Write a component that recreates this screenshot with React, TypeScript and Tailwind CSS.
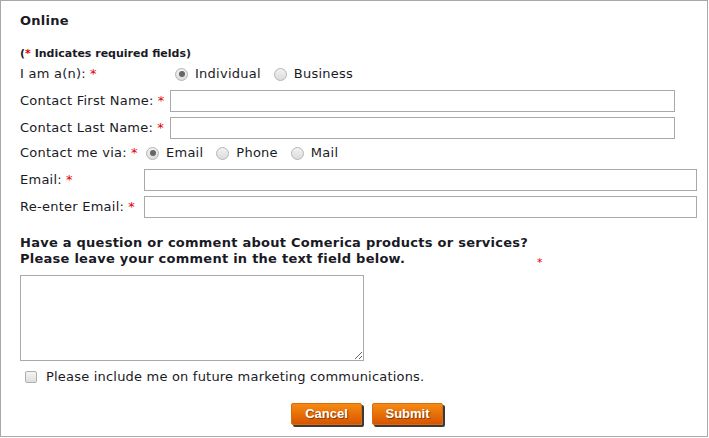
import React from 'react';

const Req: React.FC = () => <span className="text-[#e00000] ml-[4px]">*</span>;

const Radio: React.FC<{ checked?: boolean }> = ({ checked }) => (
  <span className="inline-flex items-center justify-center w-[13px] h-[13px] rounded-full border border-[#b4b4b4] bg-gradient-to-b from-[#f2f2f2] to-[#dcdcdc] shrink-0">
    {checked && <span className="w-[6px] h-[6px] rounded-full bg-[#666]" />}
  </span>
);

const TextBox: React.FC<{ w: string }> = ({ w }) => (
  <div className={`${w} h-[22px] border border-[#a9a9a9] bg-white shrink-0`} />
);

const OrangeButton: React.FC<{ label: string }> = ({ label }) => (
  <button className="w-[71px] h-[22px] rounded-[2px] border border-[#d86a10] bg-gradient-to-b from-[#f58a12] to-[#d85500] text-white font-bold text-[13px] tracking-normal shadow-[2px_2px_0_#3a3a3a] [text-shadow:1px_1px_1px_rgba(0,0,0,0.45)] font-['Liberation_Sans',Arial,sans-serif]">
    {label}
  </button>
);

const App: React.FC = () => {
  return (
    <div className="w-[708px] h-[437px] border border-[#a8a8a8] bg-white text-[#1a1a26] text-[13px] tracking-[0.25px] font-['DejaVu_Sans','Verdana',sans-serif] pl-[19px] pt-[12px]">
      <div className="h-[16px] leading-[16px] font-bold">Online</div>

      <div className="mt-[18px] h-[14px] leading-[14px] text-[11px] font-bold tracking-normal">
        (<span className="text-[#e00000]">*</span> Indicates required fields)
      </div>

      <div className="mt-[4px] h-[18px] flex items-center">
        <div className="w-[155px]">I am a(n):<Req /></div>
        <div className="flex items-center gap-[7px]">
          <Radio checked />
          <span className="mr-[6px]">Individual</span>
          <Radio />
          <span>Business</span>
        </div>
      </div>

      <div className="mt-[7px] flex items-center">
        <div className="w-[150px]">Contact First Name:<Req /></div>
        <TextBox w="w-[505px]" />
      </div>

      <div className="mt-[5px] flex items-center">
        <div className="w-[150px]">Contact Last Name:<Req /></div>
        <TextBox w="w-[505px]" />
      </div>

      <div className="mt-[5px] h-[18px] flex items-center">
        <div className="w-[126px]">Contact me via:<Req /></div>
        <div className="flex items-center gap-[7px]">
          <Radio checked />
          <span className="mr-[6px]">Email</span>
          <Radio />
          <span className="mr-[6px]">Phone</span>
          <Radio />
          <span>Mail</span>
        </div>
      </div>

      <div className="mt-[7px] flex items-center">
        <div className="w-[124px]">Email:<Req /></div>
        <TextBox w="w-[553px]" />
      </div>

      <div className="mt-[5px] flex items-center">
        <div className="w-[124px]">Re-enter Email:<Req /></div>
        <TextBox w="w-[553px]" />
      </div>

      <div className="mt-[17px] flex items-end">
        <div className="w-[517px] font-bold leading-[16px]">
          Have a question or comment about Comerica products or services?
          <br />
          Please leave your comment in the text field below.
        </div>
        <span className="text-[#e00000] text-[11px] leading-[11px] -mb-[1px]">*</span>
      </div>

      <textarea className="mt-[8px] block w-[344px] h-[86px] border border-[#a9a9a9] bg-white resize-y" />

      <div className="mt-[8px] h-[16px] flex items-center">
        <span className="ml-[5px] w-[12px] h-[12px] rounded-[2px] border border-[#b0b0b0] bg-gradient-to-b from-[#f4f4f4] to-[#dedede]" />
        <span className="ml-[9px] tracking-[0.2px]">Please include me on future marketing communications.</span>
      </div>

      <div className="mt-[18px] flex pl-[271px] gap-[10px]">
        <OrangeButton label="Cancel" />
        <OrangeButton label="Submit" />
      </div>
    </div>
  );
};

export default App;
